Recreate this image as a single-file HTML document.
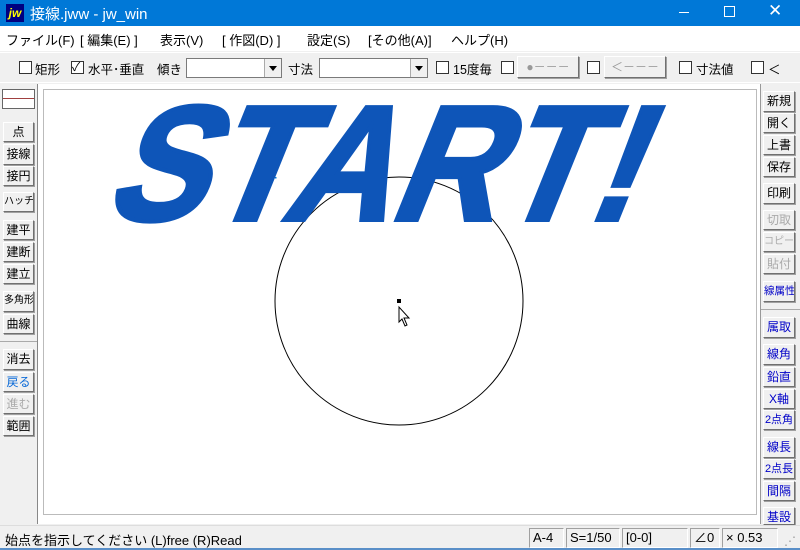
<!DOCTYPE html>
<html><head><meta charset="utf-8"><style>
*{margin:0;padding:0;box-sizing:border-box}
body{width:800px;height:550px;overflow:hidden;background:#f0f0f0;font-family:"Liberation Sans","Noto Sans CJK JP",sans-serif;font-size:13px;color:#000;position:relative}
.abs{position:absolute}
#title{left:0;top:0;width:800px;height:26px;background:#0078d7;color:#fff;font-size:15px}
#menu{left:0;top:26px;width:800px;height:25px;background:#fff;font-size:13px}
#menu span{position:absolute;top:4px;white-space:nowrap}
.btn{position:absolute;background:#f0f0f0;border:1px solid;border-color:#fff #707070 #707070 #fff;box-shadow:1px 1px 0 #a0a0a0;font-size:12px;text-align:center;line-height:18px;white-space:nowrap;overflow:hidden}
.cb{position:absolute;width:13px;height:13px;border:1px solid #333;background:#fff;top:61px}
.tl{position:absolute;top:59px;font-size:12.5px;white-space:nowrap}
.combo{position:absolute;top:58px;height:20px;background:#fff;border:1px solid #7a7a7a}
.combo i{position:absolute;right:0;top:0;width:17px;height:18px;background:#f0f0f0;border-left:1px solid #aaa}
.combo i:after{content:"";position:absolute;left:4px;top:7px;border:4px solid transparent;border-top:5px solid #000}
.sb{position:absolute;top:528px;height:20px;border:1px solid;border-color:#a0a0a0 #fff #fff #a0a0a0;font-size:13px;line-height:18px;padding-left:3px}
</style></head><body>
<div id="title" class="abs">
 <div class="abs" style="left:6px;top:4px;width:18px;height:18px;background:#000080;color:#ff0;font-style:italic;font-weight:bold;font-size:12px;line-height:18px;text-align:center">jw</div>
 <div class="abs" style="left:30px;top:3px">接線.jww - jw_win</div>
 <div class="abs" style="left:679px;top:12px;width:10px;height:1px;background:#fff"></div>
 <div class="abs" style="left:724px;top:6px;width:11px;height:11px;border:1px solid #fff"></div>
 <div class="abs" style="left:768px;top:1px;font-size:17px">✕</div>
</div>
<div id="menu" class="abs">
 <span style="left:6px">ファイル(F)</span><span style="left:80px">[ 編集(E) ]</span><span style="left:160px">表示(V)</span><span style="left:222px">[ 作図(D) ]</span><span style="left:307px">設定(S)</span><span style="left:368px">[その他(A)]</span><span style="left:451px">ヘルプ(H)</span>
</div>
<div class="abs" style="left:0;top:52px;width:800px;height:1px;background:#fff"></div>
<div class="cb" style="left:19px"></div><div class="tl" style="left:35px">矩形</div>
<div class="cb" style="left:71px"></div><div class="tl" style="left:72px;top:58px;font-size:12px">✓</div><div class="tl" style="left:88px">水平･垂直</div>
<div class="tl" style="left:157px">傾き</div>
<div class="combo" style="left:186px;width:96px"><i></i></div>
<div class="tl" style="left:288px">寸法</div>
<div class="combo" style="left:319px;width:109px"><i></i></div>
<div class="cb" style="left:436px"></div><div class="tl" style="left:453px">15度毎</div>
<div class="cb" style="left:501px"></div>
<div class="btn" style="left:517px;top:56px;width:62px;height:22px;color:#999;line-height:20px">●－－－</div>
<div class="cb" style="left:587px"></div>
<div class="btn" style="left:604px;top:56px;width:62px;height:22px;color:#999;line-height:20px">＜－－－</div>
<div class="cb" style="left:679px"></div><div class="tl" style="left:696px">寸法値</div>
<div class="cb" style="left:751px"></div><div class="tl" style="left:768px">＜</div>

<div class="abs" style="left:0;top:82px;width:800px;height:1px;background:#fff"></div>
<div class="abs" style="left:2px;top:89px;width:33px;height:20px;background:#fff;border:1px solid #666"><div style="margin-top:8px;height:1px;background:#a04040"></div></div>
<div class="abs" style="left:37px;top:84px;width:1px;height:440px;background:#888"></div>
<div class="abs" style="left:38px;top:84px;width:722px;height:440px;background:#fff"></div>
<div class="abs" style="left:43px;top:89px;width:714px;height:426px;border:1px solid #bbb"></div>
<div class="abs" style="left:760px;top:84px;width:1px;height:440px;background:#999"></div>

<svg class="abs" style="left:0;top:0" width="800" height="550">
 <circle cx="399" cy="301" r="124" fill="none" stroke="#000" stroke-width="1"/>
 <rect x="397" y="299" width="4" height="4" fill="#000"/>
 <path d="M399 307 L399 322 L402 319 L405 326 L407 325 L404 318 L409 318 Z" fill="#fff" stroke="#000" stroke-width="1"/>
 <rect x="275" y="177" width="1.5" height="1.5" fill="#0078d7"/>
 <g transform="translate(102,220) skewX(-22)">
  <text x="0" y="0" font-family="Liberation Sans" font-weight="bold" font-size="164" fill="#0e55b8" stroke="#0e55b8" stroke-width="4" textLength="530" lengthAdjust="spacingAndGlyphs">START!</text>
 </g>
</svg>

<div class="btn" style="left:3px;top:122px;width:31px;height:20px">点</div>
<div class="btn" style="left:3px;top:144px;width:31px;height:21px">接線</div>
<div class="btn" style="left:3px;top:166px;width:31px;height:20px">接円</div>
<div class="btn" style="left:3px;top:192px;width:31px;height:20px;font-size:10px">ハッチ</div>
<div class="btn" style="left:3px;top:220px;width:31px;height:20px">建平</div>
<div class="btn" style="left:3px;top:242px;width:31px;height:20px">建断</div>
<div class="btn" style="left:3px;top:264px;width:31px;height:20px">建立</div>
<div class="btn" style="left:3px;top:291px;width:31px;height:21px;font-size:10px">多角形</div>
<div class="btn" style="left:3px;top:314px;width:31px;height:20px">曲線</div>
<div class="abs" style="left:0;top:341px;width:37px;height:1px;background:#aaa"></div>
<div class="btn" style="left:3px;top:349px;width:31px;height:21px">消去</div>
<div class="btn" style="left:3px;top:372px;width:31px;height:20px;color:#0a6ad8">戻る</div>
<div class="btn" style="left:3px;top:394px;width:31px;height:20px;color:#aaa">進む</div>
<div class="btn" style="left:3px;top:416px;width:31px;height:20px">範囲</div>

<div class="btn" style="left:763px;top:91px;width:32px;height:21px">新規</div>
<div class="btn" style="left:763px;top:113px;width:32px;height:20px">開く</div>
<div class="btn" style="left:763px;top:135px;width:32px;height:20px">上書</div>
<div class="btn" style="left:763px;top:157px;width:32px;height:20px">保存</div>
<div class="btn" style="left:763px;top:183px;width:32px;height:21px">印刷</div>
<div class="btn" style="left:763px;top:210px;width:32px;height:20px;color:#aaa">切取</div>
<div class="btn" style="left:763px;top:232px;width:32px;height:20px;color:#aaa;font-size:10px">コピー</div>
<div class="btn" style="left:763px;top:254px;width:32px;height:20px;color:#aaa">貼付</div>
<div class="btn" style="left:763px;top:281px;width:32px;height:21px;color:#0000c8;font-size:10.5px">線属性</div>
<div class="abs" style="left:761px;top:309px;width:39px;height:1px;background:#aaa"></div>
<div class="btn" style="left:763px;top:317px;width:32px;height:21px;color:#0000c8">属取</div>
<div class="btn" style="left:763px;top:344px;width:32px;height:21px;color:#0000c8">線角</div>
<div class="btn" style="left:763px;top:367px;width:32px;height:20px;color:#0000c8">鉛直</div>
<div class="btn" style="left:763px;top:389px;width:32px;height:20px;color:#0000c8">X軸</div>
<div class="btn" style="left:763px;top:410px;width:32px;height:20px;color:#0000c8;font-size:11px">2点角</div>
<div class="btn" style="left:763px;top:437px;width:32px;height:21px;color:#0000c8">線長</div>
<div class="btn" style="left:763px;top:459px;width:32px;height:20px;color:#0000c8;font-size:11px">2点長</div>
<div class="btn" style="left:763px;top:481px;width:32px;height:20px;color:#0000c8">間隔</div>
<div class="btn" style="left:763px;top:507px;width:32px;height:18px;color:#0000c8">基設</div>

<div class="abs" style="left:0;top:525px;width:800px;height:25px;background:#f0f0f0;border-top:1px solid #ddd"></div>
<div class="abs" style="left:5px;top:530px;font-size:13px">始点を指示してください (L)free (R)Read</div>
<div class="sb" style="left:529px;width:35px">A-4</div>
<div class="sb" style="left:566px;width:54px">S=1/50</div>
<div class="sb" style="left:622px;width:66px">[0-0]</div>
<div class="sb" style="left:690px;width:30px">∠0</div>
<div class="sb" style="left:722px;width:56px">× 0.53</div>
<div class="abs" style="left:784px;top:534px;font-size:12px;color:#999">⋰</div>
<div class="abs" style="left:0;top:548px;width:800px;height:2px;background:#5a8fc8"></div>
</body></html>
